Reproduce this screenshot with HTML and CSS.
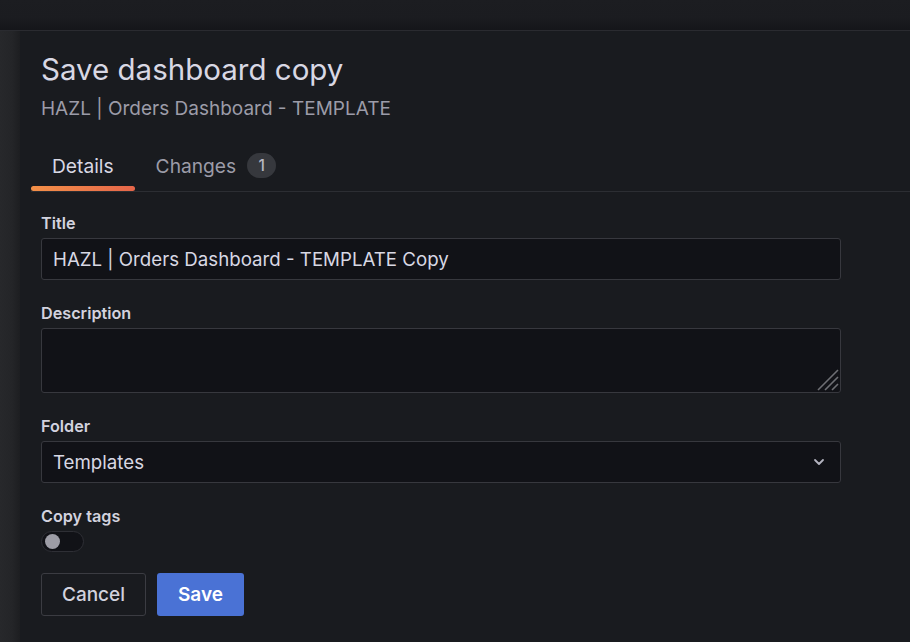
FILE: index.html
```html
<!DOCTYPE html>
<html lang="en">
<head>
<meta charset="utf-8">
<title>Save dashboard copy</title>
<link rel="stylesheet" href="styles.css">
</head>
<body>
<div class="page">
  <div class="topbar"></div>
  <div class="main">
    <div class="side"></div>
    <div class="drawer">
      <header class="head">
        <h2 class="title">Save dashboard copy</h2>
        <div class="subtitle">HAZL | Orders Dashboard - TEMPLATE</div>
      </header>
      <nav class="tabs">
        <div class="tab active">Details</div>
        <div class="tab">Changes <span class="badge">1</span></div>
      </nav>
      <form class="form">
        <div class="field">
          <label class="label">Title</label>
          <div class="input">HAZL | Orders Dashboard - TEMPLATE Copy</div>
        </div>
        <div class="field">
          <label class="label">Description</label>
          <div class="textarea">
            <svg class="grip" width="24" height="24" viewBox="0 0 24 24"><path d="M3 23 L23 3 M10 23 L23 10 M17 23 L23 17" stroke="#6e6f74" stroke-width="1.6" fill="none"/></svg>
          </div>
        </div>
        <div class="field">
          <label class="label">Folder</label>
          <div class="input select">
            <span>Templates</span>
            <svg width="14" height="14" viewBox="0 0 14 14"><path d="M3 5 L7 9 L11 5" stroke="#b4b4c0" stroke-width="1.8" fill="none" stroke-linecap="round" stroke-linejoin="round"/></svg>
          </div>
        </div>
        <div class="field">
          <label class="label">Copy tags</label>
          <div class="switch"><span class="knob"></span></div>
        </div>
        <div class="actions">
          <button type="button" class="btn secondary">Cancel</button>
          <button type="button" class="btn primary">Save</button>
        </div>
      </form>
    </div>
  </div>
</div>
</body>
</html>
```
FILE: styles.css
```css
* { box-sizing: border-box; }
html, body { margin: 0; padding: 0; }
body {
  background: #191b1f;
  font-family: Inter, "Noto Sans", sans-serif;
  color: #ccccdc;
  width: 910px;
  height: 642px;
  overflow: hidden;
}
.page { display: flex; flex-direction: column; height: 642px; }
.topbar {
  height: 31px;
  flex: none;
  background: linear-gradient(#1c1d21 0%, #1b1c20 60%, #15161a 100%);
  border-bottom: 1px solid #2a2b30;
}
.main { display: flex; flex: 1; }
.side {
  width: 20px;
  flex: none;
  background: linear-gradient(90deg, #27282b 0%, #242528 60%, #1d1e21 100%);
}
.drawer {
  flex: 1;
  background: #191b1f;
  padding: 0 0 0 21px;
}
.head { padding-top: 20px; }
.title {
  margin: 0;
  font-size: 29.5px;
  font-weight: 400;
  line-height: 36px;
  color: #d8d8e4;
}
.subtitle {
  margin-top: 10px;
  font-size: 19px;
  line-height: 24px;
  color: #9c9ca8;
}
.tabs {
  display: flex;
  margin: 31px 0 0 -10px;
  border-bottom: 1px solid #2c2e33;
  height: 40px;
}
.tab {
  position: relative;
  padding: 0 21px;
  font-size: 19.2px;
  line-height: 28px;
  color: #9c9ca8;
  display: flex;
  align-items: flex-start;
  gap: 11px;
}
.tab.active { color: #d8d8e4; }
.tab.active::after {
  content: "";
  position: absolute;
  left: 0;
  right: 0;
  bottom: 0;
  height: 5px;
  border-radius: 3px;
  background: linear-gradient(90deg, #f39048 0%, #e6664a 100%);
}
.badge {
  display: inline-flex;
  align-items: center;
  justify-content: center;
  width: 29px;
  height: 25px;
  margin-top: 1px;
  border-radius: 13px;
  background: #36383d;
  color: #b8b8c4;
  font-size: 15.5px;
  font-weight: 500;
}
.form { padding: 21px 69px 0 0; display: flex; flex-direction: column; }
.field { display: flex; flex-direction: column; margin-bottom: 23px; }
.label {
  font-size: 16.2px;
  font-weight: 600;
  line-height: 20px;
  color: #d2d2de;
  margin-bottom: 5px;
}
.input {
  height: 42px;
  background: #111217;
  border: 1px solid #37383e;
  border-radius: 3px;
  padding: 0 11px;
  display: flex;
  align-items: center;
  font-size: 18.7px;
  color: #d8d8e4;
}
.select { justify-content: space-between; padding-right: 14px; }
.textarea {
  position: relative;
  height: 65px;
  background: #111217;
  border: 1px solid #37383e;
  border-radius: 3px;
}
.grip { position: absolute; right: 1px; bottom: 1px; }
.switch {
  width: 43px;
  height: 21px;
  border-radius: 11px;
  background: #111217;
  border: 1px solid #2e2f35;
  position: relative;
  margin-top: 0;
}
.knob {
  position: absolute;
  left: 3px;
  top: 2px;
  width: 15px;
  height: 15px;
  border-radius: 50%;
  background: #9d9da6;
}
.actions { display: flex; gap: 11px; margin-top: -2px; }
.btn {
  height: 43px;
  border-radius: 3px;
  font-family: Inter, "Noto Sans", sans-serif;
  font-size: 19px;
  padding: 0;
  cursor: pointer;
}
.secondary {
  width: 105px;
  background: transparent;
  border: 1px solid #3b3c42;
  color: #d2d2de;
  font-weight: 500;
}
.primary {
  width: 87px;
  background: #4a72d5;
  border: none;
  color: #ffffff;
  font-weight: 600;
}
```
